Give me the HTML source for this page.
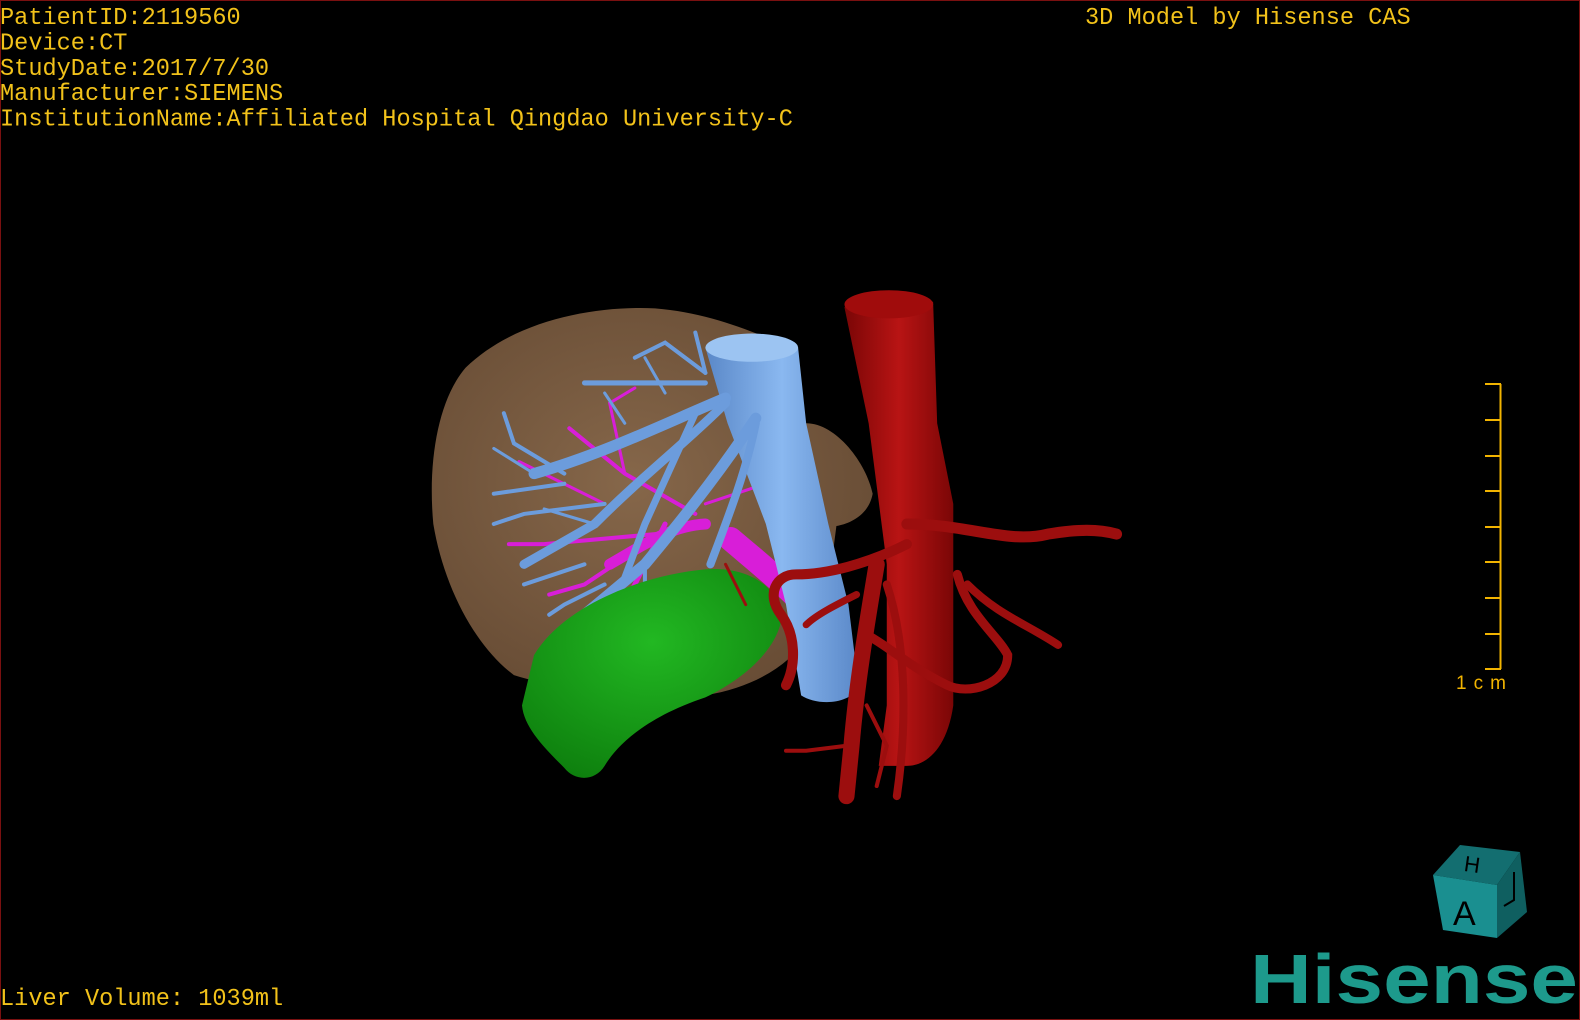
<!DOCTYPE html>
<html><head><meta charset="utf-8"><style>
html,body{margin:0;padding:0;background:#000;}
body{width:1580px;height:1020px;overflow:hidden;position:relative;}
svg{position:absolute;left:0;top:0;}
.t{font-family:"Liberation Mono",monospace;font-size:23.6px;fill:#f2c21a;}
</style></head><body>
<svg width="1580" height="1020" viewBox="0 0 1580 1020" xmlns="http://www.w3.org/2000/svg">
<defs>
<radialGradient id="lv" cx="0.45" cy="0.45" r="0.65"><stop offset="0" stop-color="#86674a"/><stop offset="1" stop-color="#654a33"/></radialGradient>
<linearGradient id="bl" x1="0" x2="1"><stop offset="0" stop-color="#5a88c8"/><stop offset="0.5" stop-color="#8ab8f0"/><stop offset="1" stop-color="#5a88c8"/></linearGradient>
<linearGradient id="rd" x1="0" x2="1"><stop offset="0" stop-color="#7a0606"/><stop offset="0.5" stop-color="#b81414"/><stop offset="1" stop-color="#7a0606"/></linearGradient>
<radialGradient id="gr" cx="0.5" cy="0.35" r="0.7"><stop offset="0" stop-color="#22b822"/><stop offset="1" stop-color="#0e800e"/></radialGradient>
</defs>
<rect x="0.5" y="0.5" width="1579" height="1019" fill="#000" stroke="#7a1010" stroke-width="1"/>
<g transform="scale(1.0077)">
<path d="M462 365 C510 318 590 303 650 306 C700 310 740 326 780 343 L800 420 C830 420 860 460 866 490 C862 512 842 520 830 522 L820 600 C800 650 760 680 700 690 C650 692 560 686 510 670 C470 640 440 580 430 520 C424 455 436 395 462 365 Z" fill="url(#lv)"/>
<g stroke="#d81ed8" fill="none" stroke-linecap="round">
<path d="M725 535 C760 565 800 595 835 645" stroke-width="24"/>
<path d="M700 520 C665 522 640 540 605 560" stroke-width="11"/>
<path d="M690 510 L620 470 L565 425" stroke-width="4"/>
<path d="M650 530 L540 540 L505 540" stroke-width="4"/>
<path d="M640 540 L580 580 L545 590" stroke-width="4"/>
<path d="M660 520 L620 600" stroke-width="5"/>
<path d="M620 470 L605 400 L630 385" stroke-width="3"/>
<path d="M600 500 L515 458" stroke-width="3"/>
<path d="M700 500 L760 480 L790 490" stroke-width="3"/>
</g>
<path d="M700 345 C720 330 770 330 792 345 L800 420 L822 520 L842 600 L852 682 C842 700 810 700 795 690 L780 600 L760 520 L722 420 Z" fill="url(#bl)"/>
<ellipse cx="746" cy="345" rx="46" ry="14" fill="#9cc4f2"/>
<g stroke="#6c9cdc" fill="none" stroke-linecap="round">
<path d="M720 395 C660 420 600 450 530 470" stroke-width="11"/>
<path d="M720 400 C680 440 640 470 590 520 L520 560" stroke-width="9"/>
<path d="M750 415 C720 460 690 500 640 560 L580 610" stroke-width="11"/>
<path d="M750 420 C740 470 720 520 705 560" stroke-width="8"/>
<path d="M690 410 L640 520 L610 600" stroke-width="7"/>
<path d="M700 380 L640 380 L580 380" stroke-width="5"/>
<path d="M700 370 L660 340 L630 355" stroke-width="4"/>
<path d="M700 370 L690 330" stroke-width="4"/>
<path d="M560 470 L510 440 L500 410" stroke-width="4"/>
<path d="M560 480 L490 490" stroke-width="4"/>
<path d="M600 500 L520 510 L490 520" stroke-width="4"/>
<path d="M580 560 L520 580" stroke-width="4"/>
<path d="M600 580 L560 600 L545 610" stroke-width="4"/>
<path d="M640 560 L640 600" stroke-width="4"/>
<path d="M530 470 L490 445" stroke-width="3"/>
<path d="M590 520 L540 505" stroke-width="3"/>
<path d="M620 420 L600 390" stroke-width="3"/>
<path d="M660 390 L640 355" stroke-width="3"/>
</g>
<path d="M530 650 C560 600 640 570 700 565 C740 562 772 580 776 612 C772 642 742 672 700 692 C640 712 612 740 600 760 C590 776 570 775 560 762 C540 742 520 722 518 700 Z" fill="url(#gr)"/>
<path d="M838 305 C850 288 912 284 926 300 L930 420 L946 500 L946 700 C940 742 920 760 900 760 L872 760 L880 700 L880 560 L862 420 Z" fill="url(#rd)"/>
<ellipse cx="882" cy="302" rx="44" ry="14" fill="#a00c0c"/>
<g stroke="#9c0e0e" fill="none" stroke-linecap="round">
<path d="M900 520 C960 520 1000 540 1040 530 C1070 525 1090 525 1108 530" stroke-width="11"/>
<path d="M900 540 C860 560 820 570 790 570 C770 570 760 590 775 610 C790 630 790 660 780 680" stroke-width="10"/>
<path d="M950 570 C960 610 990 630 1000 650 C1000 680 960 690 940 680 C900 660 880 640 860 630" stroke-width="9"/>
<path d="M870 560 C860 620 850 680 845 740 L840 790" stroke-width="16"/>
<path d="M880 580 C900 640 900 720 890 790" stroke-width="8"/>
<path d="M960 580 C990 610 1020 620 1050 640" stroke-width="8"/>
<path d="M850 590 C830 600 810 610 800 620" stroke-width="7"/>
<path d="M840 740 L800 745 L780 745" stroke-width="4"/>
<path d="M860 700 L880 740 L870 780" stroke-width="4"/>
<path d="M720 560 L740 600" stroke-width="3"/>
</g>
</g>
<text class="t" x="0" y="24">PatientID:2119560</text>
<text class="t" x="0" y="49.5">Device:CT</text>
<text class="t" x="0" y="75">StudyDate:2017/7/30</text>
<text class="t" x="0" y="100">Manufacturer:SIEMENS</text>
<text class="t" x="0" y="125.5">InstitutionName:Affiliated Hospital Qingdao University-C</text>
<text class="t" x="1085" y="24">3D Model by Hisense CAS</text>
<text class="t" x="0" y="1005">Liver Volume: 1039ml</text>
<g stroke="#f2b400" stroke-width="2">
<line x1="1500.5" y1="384" x2="1500.5" y2="669"/>
<line x1="1485" y1="384" x2="1501" y2="384"/>
<line x1="1485" y1="420" x2="1501" y2="420"/>
<line x1="1485" y1="456" x2="1501" y2="456"/>
<line x1="1485" y1="491" x2="1501" y2="491"/>
<line x1="1485" y1="527" x2="1501" y2="527"/>
<line x1="1485" y1="562" x2="1501" y2="562"/>
<line x1="1485" y1="598" x2="1501" y2="598"/>
<line x1="1485" y1="634" x2="1501" y2="634"/>
<line x1="1485" y1="669" x2="1501" y2="669"/>
</g>
<text x="1456" y="689" font-family="Liberation Sans,sans-serif" font-size="19" fill="#f2b400" textLength="50">1cm</text>
<polygon points="1433,875 1460,845 1520,852 1497,885" fill="#136e70"/>
<polygon points="1433,875 1497,885 1497,938 1443,930" fill="#1a8f90"/>
<polygon points="1497,885 1520,852 1527,912 1497,938" fill="#0f5f60"/>
<text x="1453" y="925" font-family="Liberation Sans,sans-serif" font-size="34" fill="#000">A</text>
<text x="1464" y="872" font-family="Liberation Sans,sans-serif" font-size="22" fill="#000" transform="rotate(8 1472 866)">H</text>
<path d="M1514 872 L1514 900 L1504 906" stroke="#000" stroke-width="2" fill="none"/>
<text x="1250" y="1003" font-family="Liberation Sans,sans-serif" font-weight="bold" font-size="70" fill="#1d9a8c" textLength="328" lengthAdjust="spacingAndGlyphs">Hisense</text>
</svg>
</body></html>
